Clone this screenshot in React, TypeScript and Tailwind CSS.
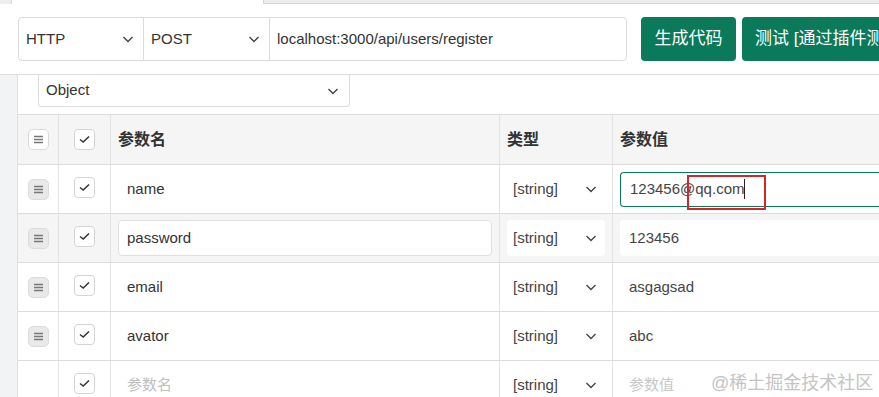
import React from "react";

const Chevron = ({ className = "" }: { className?: string }) => (
  <svg width="14" height="14" viewBox="0 0 14 14" className={className}>
    <path d="M2.5 5 L7 9.5 L11.5 5" fill="none" stroke="#444" strokeWidth="1.4" />
  </svg>
);

const Drag = ({ header = false }: { header?: boolean }) => (
  <div
    className={`w-[21px] h-[21px] rounded-[5px] flex items-center justify-center ${
      header ? "bg-white border border-[#d9d9d9]" : "bg-[#e9e9e9] border border-[#dcdcdc]"
    }`}
  >
    <svg width="11" height="9" viewBox="0 0 11 9">
      <path d="M1 1.5h9M1 4.5h9M1 7.5h9" stroke="#777" strokeWidth="1.3" />
    </svg>
  </div>
);

const Check = () => (
  <div className="w-[21px] h-[21px] shrink-0 rounded-[4px] bg-white border border-[#d4d4d4] flex items-center justify-center">
    <svg width="13" height="11" viewBox="0 0 13 11">
      <path d="M2 5.5 L5.2 8 L11 2.5" fill="none" stroke="#333" strokeWidth="1.5" />
    </svg>
  </div>
);

type Row = { name: string; value: string; kind: "plain" | "focus" | "hover" | "empty" };

const rows: Row[] = [
  { name: "name", value: "123456@qq.com", kind: "focus" },
  { name: "password", value: "123456", kind: "hover" },
  { name: "email", value: "asgagsad", kind: "plain" },
  { name: "avator", value: "abc", kind: "plain" },
  { name: "", value: "", kind: "empty" },
];

export default function App() {
  return (
    <div
      className="w-[879px] h-[397px] overflow-hidden bg-white text-[#333] relative"
      style={{ fontFamily: '"Liberation Sans", Arial, "Noto Sans CJK SC", sans-serif' }}
    >
      {/* top tab strip */}
      <div className="flex h-[4px]">
        <div className="w-[12px] bg-[#eeeeee] border-r border-[#d6d6d6]" />
        <div className="w-[251px] bg-white" />
        <div className="flex-1 bg-[#eeeeee] border-l border-[#d6d6d6] border-b" />
      </div>
      {/* header bar */}
      <div className="h-[71px] border-b border-[#dcdcdc] flex items-start pt-[13px] pl-[18px] overflow-hidden">
        <div className="flex shrink-0 h-[44px] border border-[#dcdcdc] rounded-[4px] w-[609px] bg-white">
          <div className="w-[125px] flex items-center justify-between pl-[7px] pr-[8px] border-r border-[#dcdcdc] text-[15px] text-[#333]">
            <span>HTTP</span>
            <Chevron />
          </div>
          <div className="w-[126px] flex items-center justify-between pl-[7px] pr-[8px] border-r border-[#dcdcdc] text-[15px] text-[#333]">
            <span>POST</span>
            <Chevron />
          </div>
          <div className="flex-1 flex items-center pl-[7px] text-[15px] text-[#333]">
            localhost:3000/api/users/register
          </div>
        </div>
        <button className="ml-[14px] h-[44px] w-[95px] rounded-[4px] bg-[#0b7a5a] text-white text-[17px] flex items-center justify-center shrink-0">
          生成代码
        </button>
        <button className="ml-[6px] h-[44px] w-[180px] rounded-[4px] bg-[#0b7a5a] text-white text-[17px] flex items-center pl-[13px] whitespace-nowrap shrink-0">
          测试 [通过插件测试]
        </button>
      </div>
      {/* body */}
      <div className="flex h-[322px] overflow-hidden">
        <div className="w-[18px] bg-[#f2f3f5] border-r border-[#e0e0e0] shrink-0" />
        <div className="flex-1 flex flex-col">
          <div className="pl-[20px] h-[39px] shrink-0">
            <div className="w-[312px] h-[32px] border border-t-0 border-[#dcdcdc] rounded-b-[4px] flex items-center justify-between pl-[7px] pr-[9px] text-[15px]">
              <span>Object</span>
              <Chevron />
            </div>
          </div>
          {/* table */}
          <div className="border-t border-[#dcdcdc] shrink-0">
            <div className="flex h-[50px] bg-[#f5f5f5] border-b border-[#dcdcdc] text-[16px] font-bold text-[#333]">
              <div className="w-[41px] flex items-center justify-center border-r border-[#e3e3e3]"><Drag header /></div>
              <div className="w-[52px] flex items-center justify-center border-r border-[#e3e3e3]"><Check /></div>
              <div className="w-[389px] flex items-center pl-[7px] border-r border-[#e3e3e3]">参数名</div>
              <div className="w-[113px] flex items-center pl-[7px] border-r border-[#e3e3e3]">类型</div>
              <div className="flex-1 flex items-center pl-[7px]">参数值</div>
            </div>
            {rows.map((r, i) => (
              <div
                key={i}
                className={`flex h-[49px] border-b border-[#dcdcdc] text-[15px] ${
                  r.kind === "hover" ? "bg-[#f5f5f5]" : "bg-white"
                }`}
              >
                <div className="w-[41px] flex items-center justify-center border-r border-[#e3e3e3]">
                  {r.kind !== "empty" && <Drag />}
                </div>
                <div className="w-[52px] flex items-start pt-[12px] justify-center border-r border-[#e3e3e3]"><Check /></div>
                <div className="w-[389px] flex items-center px-[7px] border-r border-[#e3e3e3]">
                  {r.kind === "hover" ? (
                    <div className="w-full h-[36px] bg-white border border-[#e0e0e0] rounded-[4px] flex items-center pl-[8px]">
                      {r.name}
                    </div>
                  ) : r.kind === "empty" ? (
                    <span className="pl-[9px] text-[#c0c0c0]">参数名</span>
                  ) : (
                    <span className="pl-[9px]">{r.name}</span>
                  )}
                </div>
                <div className="w-[113px] flex items-center px-[7px] border-r border-[#e3e3e3]">
                  <div className={`w-full h-[36px] rounded-[4px] flex items-center justify-between pl-[6px] pr-[7px] text-[#444] ${r.kind === "hover" ? "bg-white" : ""}`}>
                    <span>[string]</span>
                    <Chevron />
                  </div>
                </div>
                <div className="flex-1 flex items-center pl-[7px]">
                  {r.kind === "focus" ? (
                    <div className="relative w-full h-[35px] border border-[#0b7a5a] border-r-0 rounded-l-[4px] flex items-center pl-[9px] text-[#444]">
                      <span>123456@qq.com</span>
                      <span className="w-px h-[20px] bg-[#222]" />
                      <div className="absolute left-[66px] top-[2px] w-[79px] h-[35px] border-2 border-[#d0272b]" />
                    </div>
                  ) : r.kind === "hover" ? (
                    <div className="w-full h-[36px] bg-white rounded-l-[4px] flex items-center pl-[9px] text-[#444]">
                      {r.value}
                    </div>
                  ) : r.kind === "empty" ? (
                    <span className="pl-[9px] text-[#c8c8c8]">参数值</span>
                  ) : (
                    <span className="pl-[9px] text-[#444]">{r.value}</span>
                  )}
                </div>
              </div>
            ))}
          </div>
        </div>
      </div>
      <div className="absolute left-[711px] top-[370px] text-[18px] text-[#c4c4c4] whitespace-nowrap">
        @稀土掘金技术社区
      </div>
    </div>
  );
}
